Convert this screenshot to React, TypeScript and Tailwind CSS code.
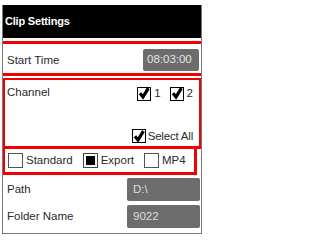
import React from 'react';

type BoxState = 'checked' | 'filled' | 'empty';

function Box({ state }: { state: BoxState }) {
    if (state === 'checked') {
        return (
            <span className="relative inline-block w-[14px] h-[14px] border-[1.5px] border-black bg-white shrink-0">
                <svg viewBox="0 0 14 14" className="absolute left-[-1px] top-[-1.5px] w-[14px] h-[14px]">
                    <path d="M3 7.2 L6 11 L11.4 2.2" fill="none" stroke="#000" strokeWidth="3.2" />
                </svg>
            </span>
        );
    }
    if (state === 'filled') {
        return (
            <span className="inline-flex items-center justify-center w-[15px] h-[15px] border border-[#444] bg-white shrink-0">
                <span className="w-[9px] h-[9px] bg-black" />
            </span>
        );
    }
    return <span className="inline-block w-[15px] h-[15px] border border-[#555] bg-white shrink-0" />;
}

export default function App() {
    return (
        <div className="w-[204px] h-[237px] bg-white pt-[5px] pl-[2px] font-['Liberation_Sans',Arial,sans-serif] text-[#2a2a2a]">
            <div className="w-[200px] h-[229px] border-x border-b border-[#7a7a7a] flex flex-col">
                {/* Header */}
                <div className="h-[33px] bg-black flex items-center pl-[2px]">
                    <span className="text-white font-bold text-[11px] tracking-[-0.2px]">Clip Settings</span>
                </div>
                <div className="h-[3px]" />

                {/* Start time */}
                <div className="border-y-[3px] border-[#f00000] h-[35px] flex items-end justify-between pb-[2px] pl-[4px] pr-[2px]">
                    <span className="text-[11.5px] leading-[22px]">Start Time</span>
                    <div className="w-[56px] h-[22px] bg-[#6c6c6c] rounded-[2px] flex items-center pl-[4px] text-[11.5px] text-[#e6e6e6]">
                        08:03:00
                    </div>
                </div>
                <div className="h-[2px]" />

                {/* Channel */}
                <div className="border-t-2 border-b-[3px] border-x-2 border-[#f00000] h-[71px] flex flex-col pl-[2px] pr-[6px]">
                    <div className="flex items-start justify-between pt-[5px]">
                        <span className="text-[11.5px] leading-[14px]">Channel</span>
                        <div className="flex items-center gap-[3px] text-[11.5px]">
                            <Box state="checked" />
                            <span className="mr-[6px]">1</span>
                            <Box state="checked" />
                            <span>2</span>
                        </div>
                    </div>
                    <div className="flex-1" />
                    <div className="flex items-center justify-end gap-[2px] pb-[1px] text-[11.5px] tracking-[-0.2px]">
                        <Box state="checked" />
                        <span>Select All</span>
                    </div>
                </div>

                {/* Format */}
                <div className="border-l-2 border-r-[3px] border-b-[3px] border-[#f00000] h-[26px] w-[194px] flex items-center pl-[3px] text-[11.5px]">
                    <Box state="empty" />
                    <span className="ml-[3px] mr-[10px]">Standard</span>
                    <Box state="filled" />
                    <span className="ml-[3px] mr-[10px]">Export</span>
                    <Box state="empty" />
                    <span className="ml-[3px]">MP4</span>
                </div>

                {/* Path rows */}
                <div className="flex flex-col gap-[4px] pt-[3px] pr-[1px] text-[11.5px]">
                    <div className="flex items-center justify-between pl-[4px]">
                        <span>Path</span>
                        <div className="w-[73px] h-[23px] bg-[#6c6c6c] rounded-[2px] flex items-center pl-[6px] text-[#dcdcdc]">
                            D:\
                        </div>
                    </div>
                    <div className="flex items-center justify-between pl-[4px]">
                        <span>Folder Name</span>
                        <div className="w-[73px] h-[23px] bg-[#6c6c6c] rounded-[2px] flex items-center pl-[6px] text-[#dcdcdc]">
                            9022
                        </div>
                    </div>
                </div>
            </div>
        </div>
    );
}
